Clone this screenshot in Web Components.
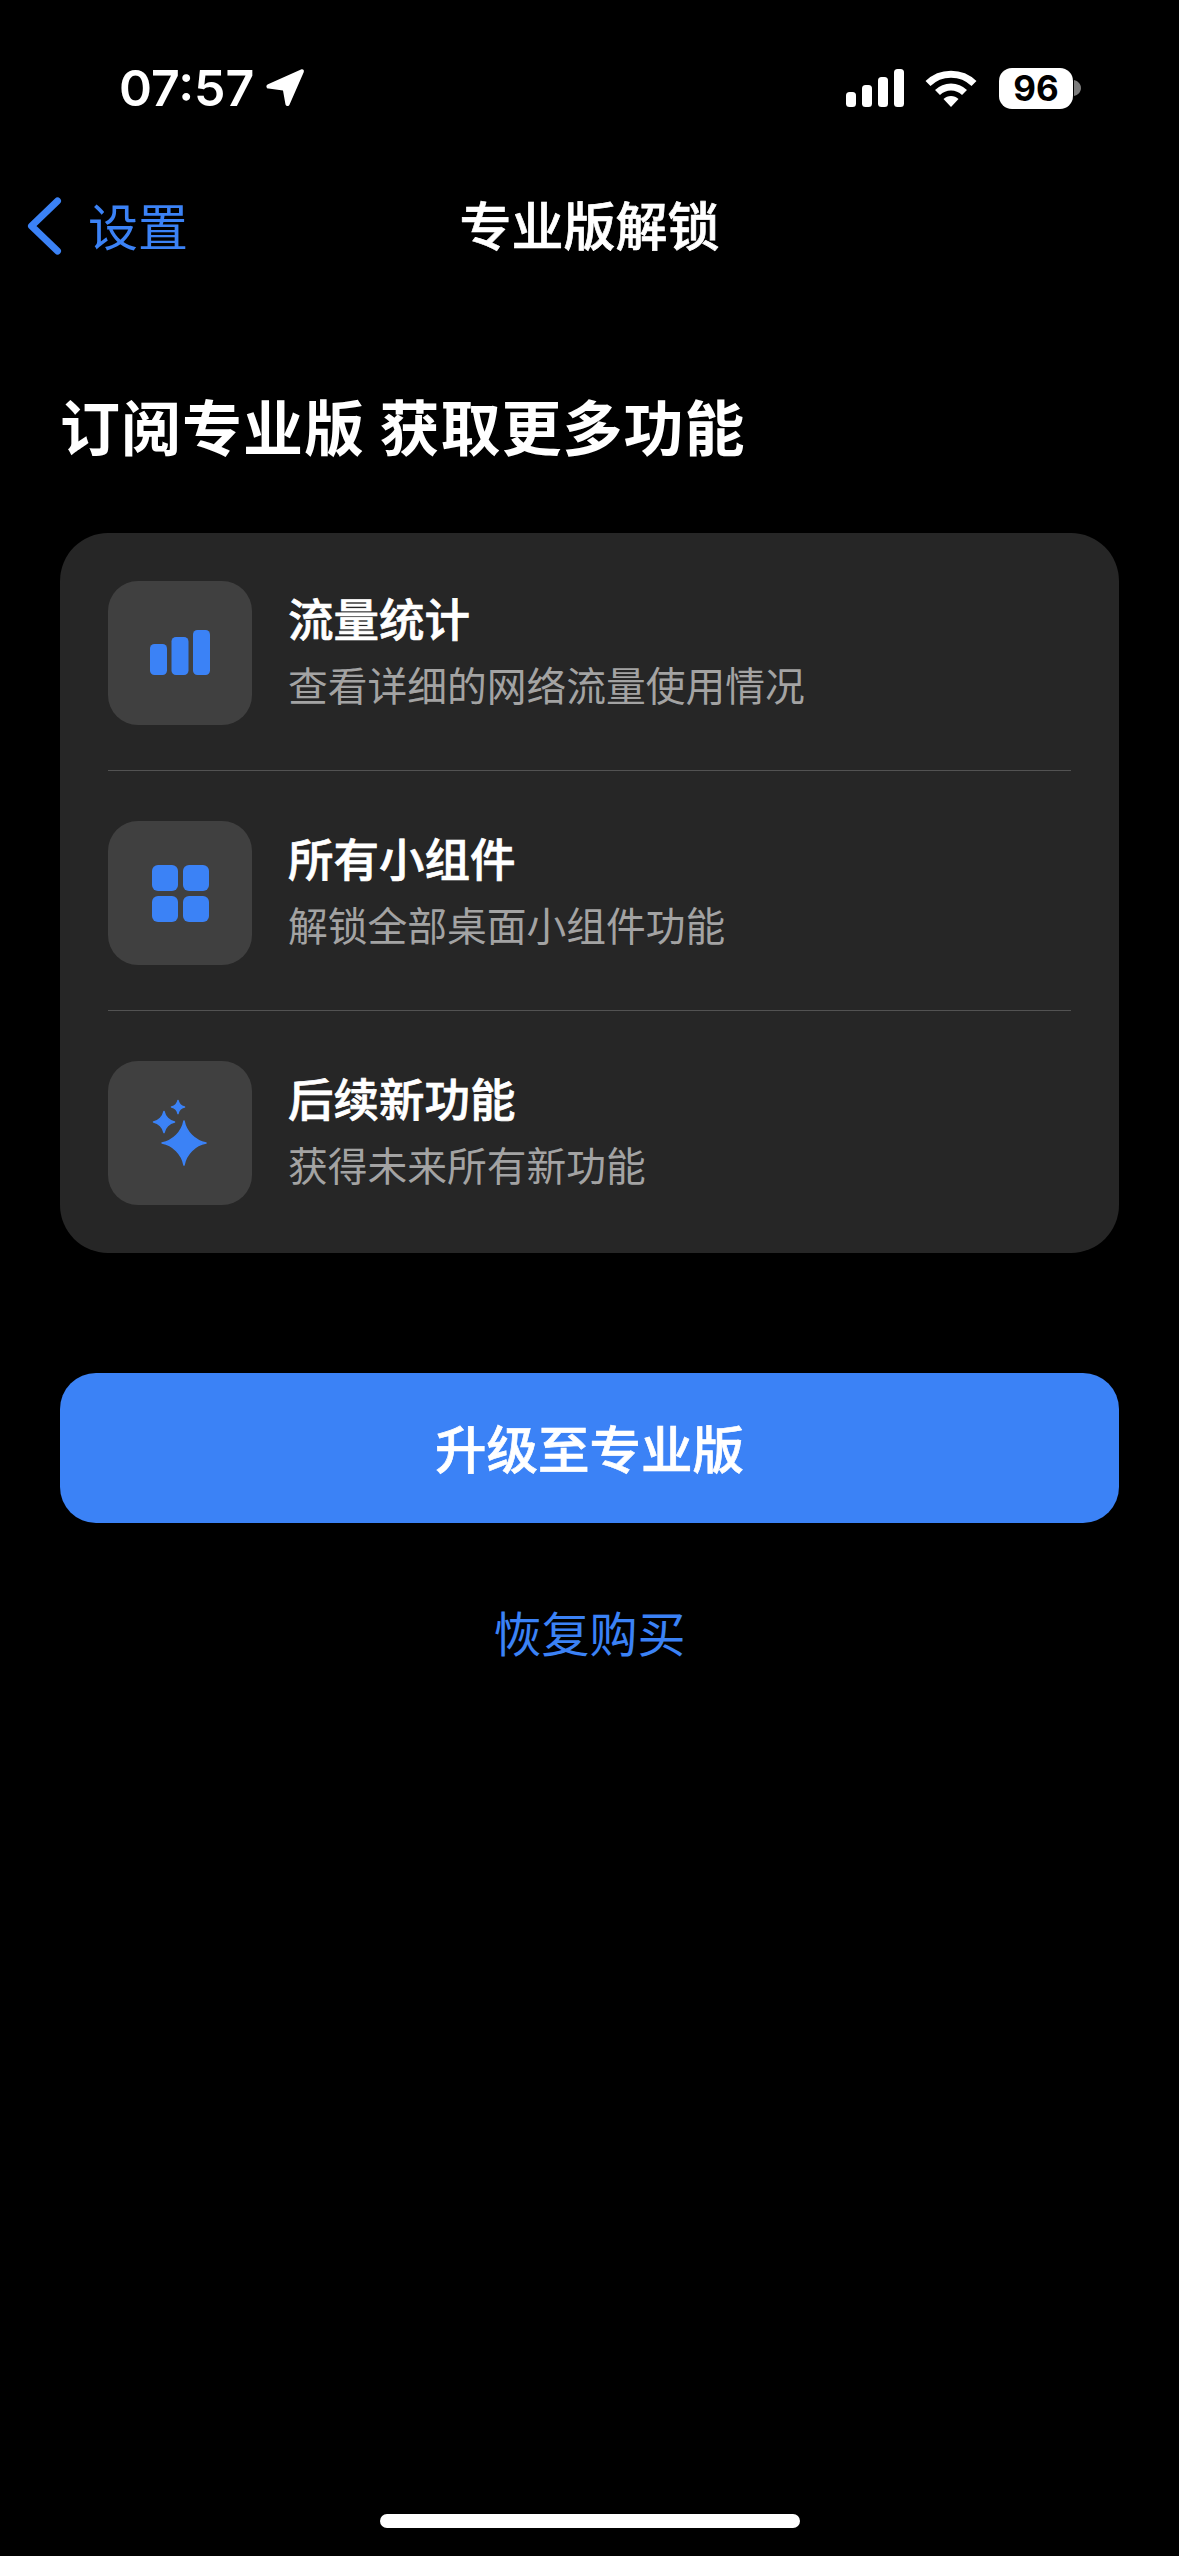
<!DOCTYPE html>
<html lang="zh">
<head>
<meta charset="utf-8">
<title>专业版解锁</title>
<style>
  html, body { margin: 0; background: #000; }
  body { font-family: "Noto Sans CJK SC", "Noto Sans", sans-serif; color: #fff; }
</style>
</head>
<body>
<pro-page>
  <status-bar></status-bar>
  <nav-bar back="设置">专业版解锁</nav-bar>
  <h1 slot="heading">订阅专业版 获取更多功能</h1>
  <feature-card slot="card">
    <feature-row icon="bars" name="流量统计" detail="查看详细的网络流量使用情况"></feature-row>
    <feature-row icon="grid" name="所有小组件" detail="解锁全部桌面小组件功能"></feature-row>
    <feature-row icon="sparkles" name="后续新功能" detail="获得未来所有新功能"></feature-row>
  </feature-card>
  <upgrade-button slot="actions">升级至专业版</upgrade-button>
  <restore-link slot="actions">恢复购买</restore-link>
</pro-page>

<script>
const templatePage = document.createElement("template");
templatePage.innerHTML = `
  <style>
    :host { display: flex; flex-direction: column; width: 1179px; height: 2556px; background: #000; overflow: hidden; }
    .content { display: flex; flex-direction: column; padding: 0 60px; }
    ::slotted(h1) { margin: 0; padding: 121px 0 0 0; height: 87px; font-size: 60px; line-height: 87px; font-weight: 700; letter-spacing: 1px; }
    .card { display: block; margin-top: 65px; }
    .actions { display: flex; flex-direction: column; margin-top: 120px; }
    .home { margin: auto auto 28px; width: 420px; height: 14px; border-radius: 7px; background: #fff; }
  </style>
  <slot></slot>
  <div class="content">
    <slot name="heading"></slot>
    <div class="card"><slot name="card"></slot></div>
    <div class="actions"><slot name="actions"></slot></div>
  </div>
  <div class="home"></div>`;
class ProPage extends HTMLElement {
  constructor() {
    super();
    this.attachShadow({ mode: "open" });
    this.shadowRoot.appendChild(templatePage.content.cloneNode(true));
  }
}
customElements.define("pro-page", ProPage);

const templateStatus = document.createElement("template");
templateStatus.innerHTML = `
  <style>
    :host { display: flex; align-items: center; height: 88px; padding: 44px 98px 0 119px; font-family: Inter, "Liberation Sans", sans-serif; }
    .time { font-size: 50px; line-height: 44px; font-weight: 600; color: #fff; }
    .arrow { margin-left: 11px; }
    .right { display: flex; align-items: center; margin-left: auto; }
    .wifi { margin-left: 21px; }
    .battery { display: flex; align-items: center; justify-content: center; margin-left: 22px; width: 74px; height: 41px; border-radius: 13px; background: #fff; color: #000; font-size: 35px; line-height: 41px; font-weight: 700; }
  </style>
  <span class="time">07:57</span>
  <svg class="arrow" width="40" height="40" viewBox="0 0 40 40">
    <path d="M36 1.5C38 .7 39.5 2.2 38.7 4.2L24.6 36.6C23.6 38.9 20.8 38.5 20.4 36L18 22.5 3.5 20.6C1 20.2.7 17.2 3 16.2Z" fill="#fff"/>
  </svg>
  <div class="right">
    <svg width="58" height="38" viewBox="0 0 58 38" fill="#fff">
      <rect x="0" y="23" width="10" height="15" rx="3.5"/>
      <rect x="16" y="16" width="10" height="22" rx="3.5"/>
      <rect x="32" y="8" width="10" height="30" rx="3.5"/>
      <rect x="48" y="0" width="10" height="38" rx="3.5"/>
    </svg>
    <svg class="wifi" width="52" height="38" viewBox="0 0 52 38">
      <path d="M3 14.5C15.5 2 36.5 2 49 14.5" fill="none" stroke="#fff" stroke-width="7"/>
      <path d="M12.500 23.500C20 16 32 16 39.500 23.500" fill="none" stroke="#fff" stroke-width="7"/>
      <path d="M18.500 30C22.500 26 29.500 26 33.500 30L26 38Z" fill="#fff"/>
    </svg>
    <span class="battery">96</span>
    <svg width="8" height="16" viewBox="0 0 8 16"><path d="M1 0C5 1 8 4 8 8S5 15 1 16Z" fill="#7c7c7c"/></svg>
  </div>`;
class StatusBar extends HTMLElement {
  constructor() {
    super();
    this.attachShadow({ mode: "open" });
    this.shadowRoot.appendChild(templateStatus.content.cloneNode(true));
  }
}
customElements.define("status-bar", StatusBar);

const templateNav = document.createElement("template");
templateNav.innerHTML = `
  <style>
    :host { display: grid; grid-template-columns: 1fr auto 1fr; align-items: center; height: 72px; margin-top: 56px; }
    .back { display: flex; align-items: center; padding-left: 27px; color: #3b82f6; font-size: 50px; line-height: 72px; }
    .back svg { margin-right: 25px; }
    .title { font-size: 52px; line-height: 72px; font-weight: 500; -webkit-text-stroke: 0.7px #fff; color: #fff; }
  </style>
  <div class="back">
    <svg width="36" height="62" viewBox="0 0 36 62"><path d="M30.500 8L4.500 33L30.500 58" fill="none" stroke="#3b82f6" stroke-width="7" stroke-linecap="round" stroke-linejoin="round"/></svg>
    <span id="back-label"></span>
  </div>
  <div class="title"><slot></slot></div>
  <div></div>`;
class NavBar extends HTMLElement {
  constructor() {
    super();
    this.attachShadow({ mode: "open" });
    this.shadowRoot.appendChild(templateNav.content.cloneNode(true));
  }
  connectedCallback() {
    this.shadowRoot.querySelector("#back-label").textContent = this.getAttribute("back");
  }
}
customElements.define("nav-bar", NavBar);

const templateCardBox = document.createElement("template");
templateCardBox.innerHTML = `
  <style>
    :host { display: flex; flex-direction: column; padding: 48px; border-radius: 48px; background: #262626; }
    ::slotted(feature-row:not(:last-child)) { padding-bottom: 45px; margin-bottom: 50px; border-bottom: 1px solid #525252; }
  </style>
  <slot></slot>`;
class FeatureCard extends HTMLElement {
  constructor() {
    super();
    this.attachShadow({ mode: "open" });
    this.shadowRoot.appendChild(templateCardBox.content.cloneNode(true));
  }
}
customElements.define("feature-card", FeatureCard);

// four point star, r is the tip distance from the centre
function star(cx, cy, r) {
  const a = r * 0.09, b = r * 0.5;
  const p = (x, y) => `${cx + x} ${cy + y}`;
  return `<path stroke="#3b82f6" stroke-width="1.500" stroke-linejoin="round" d="M${p(0, -r)}` +
    `C${p(a, -b)} ${p(b, -a)} ${p(r, 0)}` +
    `C${p(b, a)} ${p(a, b)} ${p(0, r)}` +
    `C${p(-a, b)} ${p(-b, a)} ${p(-r, 0)}` +
    `C${p(-b, -a)} ${p(-a, -b)} ${p(0, -r)}Z"/>`;
}

// svg content for each icon, drawn on the 144 box of the tile
const ICONS = {
  bars: `<rect x="42" y="63" width="17" height="31" rx="4.500"/><rect x="63.500" y="56" width="17" height="38" rx="4.500"/><rect x="85" y="49" width="17" height="45" rx="4.500"/>`,
  grid: `<rect x="44" y="44" width="26" height="26" rx="6"/><rect x="75" y="44" width="26" height="26" rx="6"/><rect x="44" y="75" width="26" height="26" rx="6"/><rect x="75" y="75" width="26" height="26" rx="6"/>`,
  sparkles: star(76, 82, 22) + star(56, 61, 10.500) + star(70, 46, 6.500)
};

const templateRow = document.createElement("template");
templateRow.innerHTML = `
  <style>
    :host { display: flex; align-items: center; gap: 36px; }
    .tile { flex: none; width: 144px; height: 144px; border-radius: 30px; background: #404040; }
    .tile svg { display: block; fill: #3b82f6; }
    .text { display: flex; flex-direction: column; margin-top: -9px; }
    .name { font-size: 45.500px; line-height: 65px; font-weight: 500; -webkit-text-stroke: 0.7px #fff; color: #fff; }
    .detail { margin-top: 5px; font-size: 39.750px; line-height: 58px; color: #a3a3a3; }
  </style>
  <div class="tile"><svg width="144" height="144" viewBox="0 0 144 144"></svg></div>
  <div class="text">
    <span class="name"></span>
    <span class="detail"></span>
  </div>`;
class FeatureRow extends HTMLElement {
  constructor() {
    super();
    this.attachShadow({ mode: "open" });
    this.shadowRoot.appendChild(templateRow.content.cloneNode(true));
  }
  connectedCallback() {
    this.shadowRoot.querySelector("svg").innerHTML = ICONS[this.getAttribute("icon")];
    this.shadowRoot.querySelector(".name").textContent = this.getAttribute("name");
    this.shadowRoot.querySelector(".detail").textContent = this.getAttribute("detail");
  }
}
customElements.define("feature-row", FeatureRow);

const templateButton = document.createElement("template");
templateButton.innerHTML = `
  <style>
    :host { display: flex; align-items: center; justify-content: center; height: 147px; padding-bottom: 3px; border-radius: 36px; background: #3b82f6; color: #fff; font-size: 51.500px; font-weight: 500; -webkit-text-stroke: 0.7px #fff; }
  </style>
  <slot></slot>`;
class UpgradeButton extends HTMLElement {
  constructor() {
    super();
    this.attachShadow({ mode: "open" });
    this.shadowRoot.appendChild(templateButton.content.cloneNode(true));
  }
}
customElements.define("upgrade-button", UpgradeButton);

const templateRestore = document.createElement("template");
templateRestore.innerHTML = `
  <style>
    :host { display: block; margin-top: 74px; text-align: center; color: #3b82f6; font-size: 48px; line-height: 68px; }
  </style>
  <slot></slot>`;
class RestoreLink extends HTMLElement {
  constructor() {
    super();
    this.attachShadow({ mode: "open" });
    this.shadowRoot.appendChild(templateRestore.content.cloneNode(true));
  }
}
customElements.define("restore-link", RestoreLink);
</script>
</body>
</html>
